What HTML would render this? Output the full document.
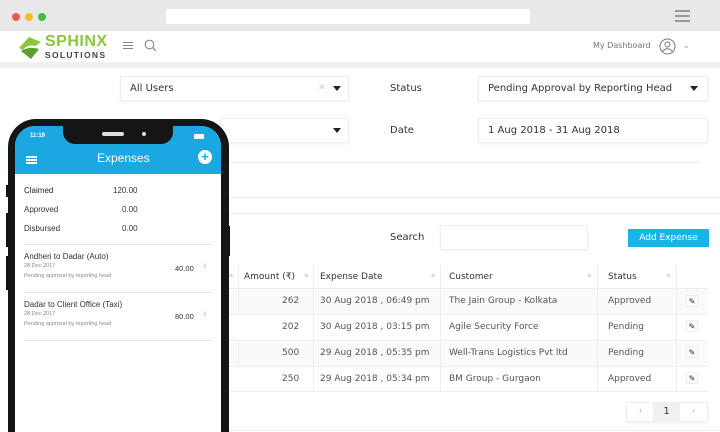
<!DOCTYPE html>
<html style="width:720px;height:432px;overflow:hidden"><head><meta charset="utf-8"><style>
*{margin:0;padding:0;box-sizing:border-box}
body{width:720px;height:432px;overflow:hidden;background:#fff;font-family:"DejaVu Sans","Liberation Sans",sans-serif;color:#333;position:relative}
.a{position:absolute}
.t{font-size:10px}
.box{position:absolute;background:#fff;border:1px solid #eee;box-shadow:0 1px 2px rgba(0,0,0,.06)}
.row{position:absolute;left:228px;width:480px;height:25px;font-size:9px;color:#555}
.row span{position:absolute;top:7px}
.ed{position:absolute;left:686px;width:12px;height:12px;border:1px solid #eee;background:#fff;font-size:8px;text-align:center;line-height:11px;color:#222}
.ph{font-family:"Liberation Sans",sans-serif}
.srt{position:absolute;top:272px;font-size:6px;color:#ddd}
</style></head><body>
<div class="a" style="left:0;top:0;width:720px;height:31px;background:#e8e8e8"></div>
<div class="a" style="left:12px;top:13px;width:8px;height:8px;border-radius:50%;background:#ee5a52"></div>
<div class="a" style="left:25px;top:13px;width:8px;height:8px;border-radius:50%;background:#f7bb2e"></div>
<div class="a" style="left:38px;top:13px;width:8px;height:8px;border-radius:50%;background:#3fc23f"></div>
<div class="a" style="left:166px;top:9px;width:364px;height:15px;background:#fff"></div>
<div class="a" style="left:675px;top:10px;width:15px;height:2px;background:#999;box-shadow:0 5px 0 #999,0 10px 0 #999"></div>
<div class="a" style="left:0;top:31px;width:720px;height:31px;background:#fff;box-shadow:0 2px 3px rgba(0,0,0,.1)"></div>
<div class="a" style="left:0;top:62px;width:720px;height:6px;background:#f0f0f0"></div>
<svg class="a" style="left:17px;top:34px" width="26" height="26" viewBox="0 0 26 26"><path d="M2 14 L12 3 L24 8 L18 12 Q10 10 6 16Z" fill="#8cc63f"/><path d="M4 17 Q12 12 22 15 L14 25Z" fill="#5aa02c"/></svg>
<div class="a ph" style="left:45px;top:33px;font-size:16px;font-weight:bold;color:#8cc63f;letter-spacing:.5px">SPHINX</div>
<div class="a ph" style="left:45px;top:50px;font-size:8.5px;font-weight:bold;color:#444;letter-spacing:1.3px">SOLUTIONS</div>
<div class="a" style="left:123px;top:42px;width:10px;height:1px;background:#888;box-shadow:0 3px 0 #888,0 6px 0 #888"></div>
<svg class="a" style="left:144px;top:39px" width="13" height="13"><circle cx="5.5" cy="5.5" r="4.3" fill="none" stroke="#888" stroke-width="1.1"/><path d="M8.7 8.7 L12 12" stroke="#888" stroke-width="1.2"/></svg>
<div class="a" style="left:593px;top:41px;font-size:8px;color:#777">My Dashboard</div>
<svg class="a" style="left:659px;top:38px" width="17" height="17"><circle cx="8.5" cy="8.5" r="7.5" fill="none" stroke="#777" stroke-width="1"/><circle cx="8.5" cy="6.5" r="2.5" fill="none" stroke="#777"/><path d="M3.5 13.5 Q8.5 8 13.5 13.5" fill="none" stroke="#777"/></svg>
<div class="a" style="left:683px;top:41px;font-size:8px;color:#999">⌄</div>

<div class="box" style="left:120px;top:76px;width:229px;height:25px"></div>
<div class="a t" style="left:130px;top:83px">All Users</div>
<div class="a" style="left:318px;top:83px;font-size:9px;color:#ccc">✕</div>
<div class="a" style="left:333px;top:86px;border:4px solid transparent;border-top:5px solid #222"></div>
<div class="box" style="left:220px;top:118px;width:129px;height:25px"></div>
<div class="a" style="left:333px;top:128px;border:4px solid transparent;border-top:5px solid #222"></div>
<div class="a t" style="left:390px;top:83px">Status</div>
<div class="box" style="left:478px;top:76px;width:230px;height:25px"></div>
<div class="a t" style="left:488px;top:83px">Pending Approval by Reporting Head</div>
<div class="a" style="left:690px;top:86px;border:4px solid transparent;border-top:5px solid #222"></div>
<div class="a t" style="left:390px;top:125px">Date</div>
<div class="box" style="left:478px;top:118px;width:230px;height:25px"></div>
<div class="a t" style="left:488px;top:125px">1 Aug 2018 - 31 Aug 2018</div>
<div class="a" style="left:220px;top:162px;width:480px;height:1px;background:#eee"></div>
<div class="a" style="left:220px;top:197px;width:500px;height:1px;background:#eee"></div>
<div class="a" style="left:220px;top:213px;width:500px;height:1px;background:#eee"></div>

<div class="a t" style="left:390px;top:232px">Search</div>
<div class="box" style="left:440px;top:225px;width:148px;height:25px"></div>
<div class="a" style="left:628px;top:229px;width:81px;height:18px;background:#17b5e6;color:#fff;font-size:9px;text-align:center;line-height:18px">Add Expense</div>

<div class="a" style="left:228px;top:265px;width:480px;height:24px;background:#fff;border-bottom:1px solid #eee"></div>
<div class="a" style="left:228px;top:289px;width:480px;height:102px;background:#fafafa"></div>
<div class="a" style="left:238px;top:264px;width:1px;height:127px;background:#eee"></div>
<div class="row" style="top:265px;color:#333"><span style="left:16px">Amount (₹)</span><span style="left:92px">Expense Date</span><span style="left:221px">Customer</span><span style="left:380px">Status</span></div>
<div class="srt" style="left:229px">◆</div><div class="srt" style="left:304px">◆</div><div class="srt" style="left:431px">◆</div><div class="srt" style="left:587px">◆</div><div class="srt" style="left:666px">◆</div>
<div class="row" style="top:289px"><span style="left:54px">262</span><span style="left:92px">30 Aug 2018 , 06:49 pm</span><span style="left:221px">The Jain Group - Kolkata</span><span style="left:380px">Approved</span></div>
<div class="row" style="top:314px;border-top:1px solid #f0f0f0;background:#fff"><span style="left:54px">202</span><span style="left:92px">30 Aug 2018 , 03:15 pm</span><span style="left:221px">Agile Security Force</span><span style="left:380px">Pending</span></div>
<div class="row" style="top:340px;border-top:1px solid #f0f0f0"><span style="left:54px">500</span><span style="left:92px">29 Aug 2018 , 05:35 pm</span><span style="left:221px">Well-Trans Logistics Pvt ltd</span><span style="left:380px">Pending</span></div>
<div class="row" style="top:366px;border-top:1px solid #f0f0f0;background:#fff"><span style="left:54px">250</span><span style="left:92px">29 Aug 2018 , 05:34 pm</span><span style="left:221px">BM Group - Gurgaon</span><span style="left:380px">Approved</span></div>
<div class="a" style="left:313px;top:265px;width:1px;height:126px;background:#eee"></div>
<div class="a" style="left:440px;top:265px;width:1px;height:126px;background:#eee"></div>
<div class="a" style="left:597px;top:265px;width:1px;height:126px;background:#eee"></div>
<div class="a" style="left:676px;top:265px;width:1px;height:126px;background:#eee"></div>
<div class="ed" style="top:295px">✎</div><div class="ed" style="top:320px">✎</div><div class="ed" style="top:346px">✎</div><div class="ed" style="top:372px">✎</div>
<div class="a" style="left:228px;top:391px;width:480px;height:1px;background:#eee"></div>
<div class="box" style="left:626px;top:402px;width:82px;height:20px"></div>
<div class="a" style="left:653px;top:402px;width:27px;height:20px;background:#f0f0f0;font-size:10px;text-align:center;line-height:20px">1</div>
<div class="a" style="left:639px;top:406px;font-size:8px;color:#999">‹</div>
<div class="a" style="left:692px;top:406px;font-size:8px;color:#999">›</div>
<div class="a" style="left:220px;top:430px;width:500px;height:1px;background:#eee"></div>

<!-- phone -->
<div class="a" style="left:6px;top:185px;width:4px;height:12px;background:#111"></div>
<div class="a" style="left:6px;top:213px;width:4px;height:34px;background:#111"></div>
<div class="a" style="left:6px;top:256px;width:4px;height:34px;background:#111"></div>
<div class="a" style="left:226px;top:226px;width:4px;height:30px;background:#111"></div>
<div class="a" style="left:8px;top:119px;width:221px;height:313px;background:#151515;border-radius:28px 28px 0 0"></div>
<div class="a" style="left:15px;top:126px;width:206px;height:306px;background:#fff;border-radius:20px 20px 0 0;overflow:hidden">
 <div class="a" style="left:0;top:0;width:206px;height:48px;background:#1ba8e2"></div>
 <div class="a" style="left:48px;top:-1px;width:110px;height:19px;background:#151515;border-radius:0 0 12px 12px"></div>
 <div class="a" style="left:87px;top:6px;width:22px;height:4px;background:#ddd;border-radius:2px"></div>
 <div class="a" style="left:127px;top:6px;width:4px;height:4px;background:#ddd;border-radius:50%"></div>
 <div class="a ph" style="left:15px;top:7px;font-size:6px;color:#fff;font-weight:bold">11:19</div>
 <div class="a" style="left:179px;top:8px;width:10px;height:5px;background:#fff;border-radius:1px"></div>
 <div class="a" style="left:11px;top:30px;width:11px;height:2px;background:#fff;box-shadow:0 3px 0 #fff,0 6px 0 #fff"></div>
 <div class="a ph" style="left:82px;top:25px;font-size:12px;color:#fff">Expenses</div>
 <div class="a" style="left:183px;top:24px;width:14px;height:14px;border-radius:50%;background:#fff;color:#1ba8e2;font:bold 13px/14px 'Liberation Sans';text-align:center">+</div>
 <div class="ph a" style="left:9px;top:60px;font-size:8px;color:#222">Claimed</div><div class="ph a" style="left:98px;top:60px;font-size:8px">120.00</div>
 <div class="ph a" style="left:9px;top:79px;font-size:8px">Approved</div><div class="ph a" style="left:107px;top:79px;font-size:8px">0.00</div>
 <div class="ph a" style="left:9px;top:98px;font-size:8px">Disbursed</div><div class="ph a" style="left:107px;top:98px;font-size:8px">0.00</div>
 <div class="a" style="left:9px;top:118px;width:188px;height:1px;background:#e5e5e5"></div>
 <div class="ph a" style="left:9px;top:126px;font-size:8px">Andheri to Dadar (Auto)</div>
 <div class="ph a" style="left:9px;top:137px;font-size:5.5px;color:#888">28 Dec 2017</div>
 <div class="ph a" style="left:9px;top:147px;font-size:5.5px;color:#888">Pending approval by reporting head</div>
 <div class="ph a" style="left:160px;top:138px;font-size:7.5px">40.00</div>
 <div class="ph a" style="left:188px;top:134px;font-size:11px;color:#bbb">›</div>
 <div class="a" style="left:9px;top:166px;width:188px;height:1px;background:#e5e5e5"></div>
 <div class="ph a" style="left:9px;top:174px;font-size:8px">Dadar to Client Office (Taxi)</div>
 <div class="ph a" style="left:9px;top:185px;font-size:5.5px;color:#888">28 Dec 2017</div>
 <div class="ph a" style="left:9px;top:195px;font-size:5.5px;color:#888">Pending approval by reporting head</div>
 <div class="ph a" style="left:160px;top:186px;font-size:7.5px">80.00</div>
 <div class="ph a" style="left:188px;top:182px;font-size:11px;color:#bbb">›</div>
 <div class="a" style="left:9px;top:214px;width:188px;height:1px;background:#e5e5e5"></div>
</div>
</body></html>
